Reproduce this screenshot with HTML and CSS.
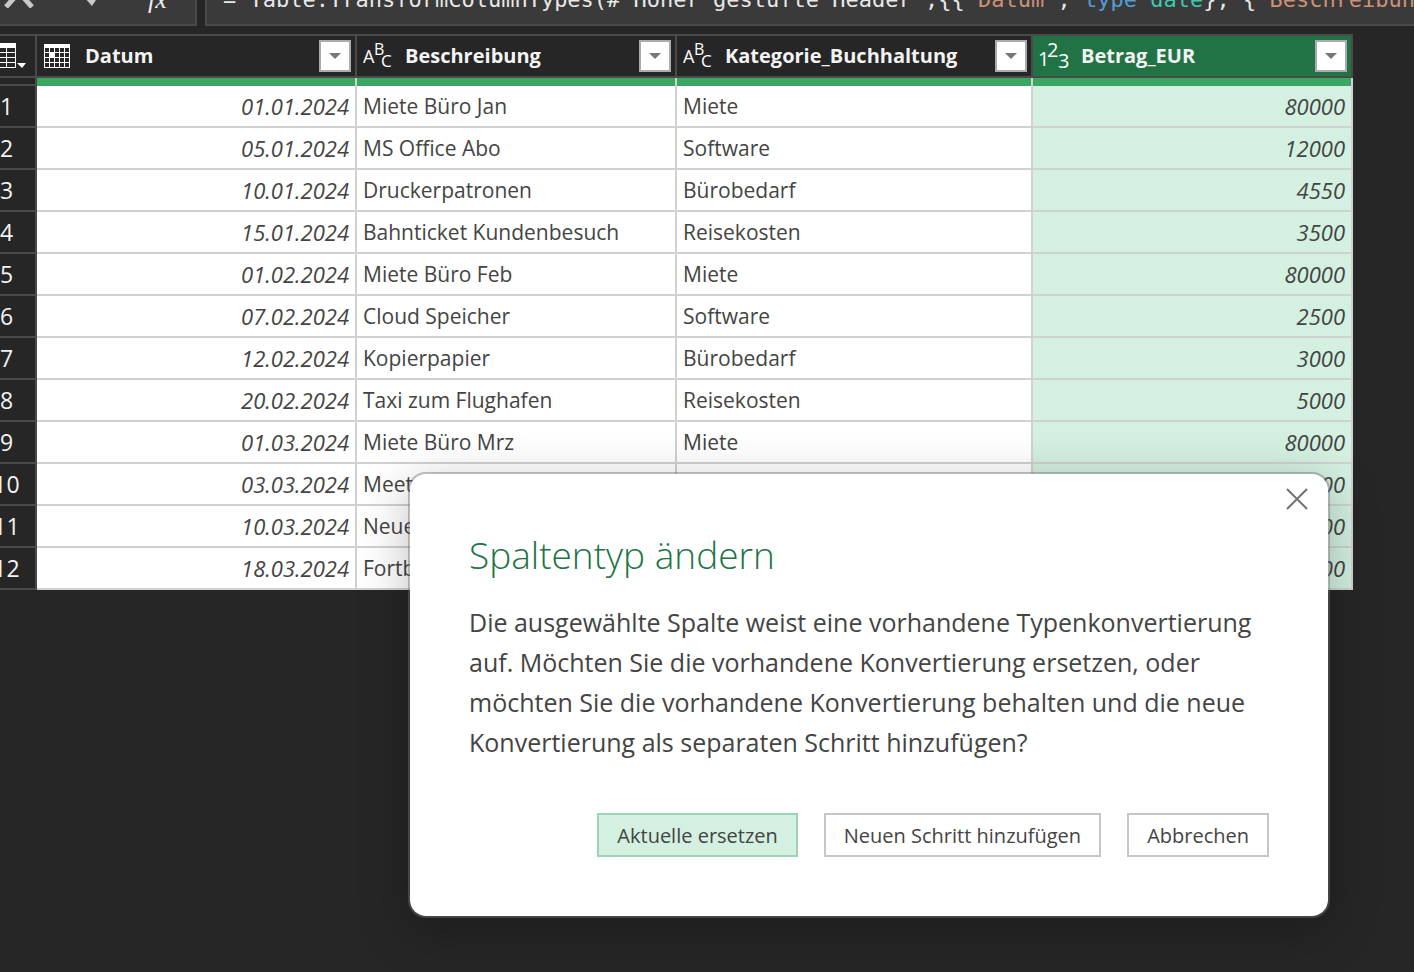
FILE: index.html
```html
<!DOCTYPE html>
<html lang="de">
<head>
<meta charset="utf-8">
<title>Power Query-Editor</title>
<meta name="viewport" content="width=device-width, initial-scale=1">
<link rel="stylesheet" href="styles.css">
</head>
<body>
<svg class="defs" aria-hidden="true">
  <symbol id="type-text" viewBox="0 0 32 28">
    <text x="0" y="21" font-size="18">A</text>
    <text x="11" y="13" font-size="16">B</text>
    <text x="18" y="25" font-size="17">C</text>
  </symbol>
  <symbol id="type-number" viewBox="0 0 32 28">
    <text x="-1" y="24" font-size="20">1</text>
    <text x="8" y="15" font-size="20">2</text>
    <text x="19" y="26" font-size="20">3</text>
  </symbol>
  <symbol id="type-date" viewBox="0 0 26 24">
    <path d="M0 0h26v24H0z" fill="#fff"/>
    <path d="M1 4h4v4H1zM6 4h4v4H6zM11 4h4v4h-4zM16 4h4v4h-4zM21 4h4v4h-4zM1 9h4v4H1zM11 9h4v4h-4zM16 9h4v4h-4zM21 9h4v4h-4zM1 14h4v4H1zM6 14h4v4H6zM11 14h4v4h-4zM16 14h4v4h-4zM21 14h4v4h-4zM1 19h4v4H1zM6 19h4v4H6zM11 19h4v4h-4zM16 19h4v4h-4zM21 19h4v4h-4z" fill="#262626"/>
    <path d="M5 8h6v6H5z" fill="#fff"/>
  </symbol>
  <symbol id="caret" viewBox="0 0 12 6"><path d="M0 0h12L6 6z"/></symbol>
</svg>

<main class="editor">
  <div class="formula-bar">
    <div class="formula-actions">
      <button class="icon-button" aria-label="Abbrechen"><svg width="30" height="30" viewBox="0 0 30 30"><path d="M2 29L26 2M4 2L28 29" fill="none" stroke="#c8c8c8" stroke-width="5"/></svg></button>
      <button class="icon-button" aria-label="Übernehmen"><svg width="30" height="30" viewBox="0 0 30 30"><path d="M8 19L16 28L24 16V0H8z" fill="#c8c8c8"/></svg></button>
      <button class="icon-button fx" aria-label="Funktion einfügen">fx</button>
    </div>
    <div class="formula"><code>= Table.TransformColumnTypes(#"Höher gestufte Header",{{<span class="str">"Datum"</span>, <span class="kw">type</span> <span class="ty">date</span>}, {<span class="str">"Beschreibung"</span></code></div>
  </div>

  <table class="grid">
    <colgroup><col class="c-index"><col class="c-std"><col class="c-std"><col class="c-wide"><col class="c-std"></colgroup>
    <thead>
      <tr>
        <th class="corner"><button class="table-menu" aria-label="Tabellenmenü"><svg width="34" height="26" viewBox="0 0 34 26"><path d="M0 0h24v25H0z" fill="#fff"/><path d="M0 5h6v4H0zM0 10h6v4H0zM0 15h6v4H0zM0 20h6v4H0zM7 5h7v4H7zM7 10h7v4H7zM7 15h7v4H7zM7 20h7v4H7zM15 5h8v4h-8zM15 10h8v4h-8zM15 15h8v4h-8zM15 20h8v4h-8z" fill="#262626"/><path d="M25 20h9l-4 5z" fill="#fff"/></svg></button></th>
        <th scope="col"><div class="head"><svg class="date-icon"><use href="#type-date"/></svg><span class="name">Datum</span><button class="filter" aria-label="Datum filtern"><svg><use href="#caret"/></svg></button></div></th>
        <th scope="col"><div class="head"><svg class="type-icon"><use href="#type-text"/></svg><span class="name">Beschreibung</span><button class="filter" aria-label="Beschreibung filtern"><svg><use href="#caret"/></svg></button></div></th>
        <th scope="col"><div class="head"><svg class="type-icon"><use href="#type-text"/></svg><span class="name">Kategorie_Buchhaltung</span><button class="filter" aria-label="Kategorie_Buchhaltung filtern"><svg><use href="#caret"/></svg></button></div></th>
        <th scope="col" class="selected"><div class="head"><svg class="type-icon"><use href="#type-number"/></svg><span class="name">Betrag_EUR</span><button class="filter" aria-label="Betrag_EUR filtern"><svg><use href="#caret"/></svg></button></div></th>
      </tr>
      <tr class="quality"><td></td><td></td><td></td><td></td><td></td></tr>
    </thead>
    <tbody>
      <tr><th scope="row">1</th><td>01.01.2024</td><td>Miete Büro Jan</td><td>Miete</td><td>80000</td></tr>
      <tr><th scope="row">2</th><td>05.01.2024</td><td>MS Office Abo</td><td>Software</td><td>12000</td></tr>
      <tr><th scope="row">3</th><td>10.01.2024</td><td>Druckerpatronen</td><td>Bürobedarf</td><td>4550</td></tr>
      <tr><th scope="row">4</th><td>15.01.2024</td><td>Bahnticket Kundenbesuch</td><td>Reisekosten</td><td>3500</td></tr>
      <tr><th scope="row">5</th><td>01.02.2024</td><td>Miete Büro Feb</td><td>Miete</td><td>80000</td></tr>
      <tr><th scope="row">6</th><td>07.02.2024</td><td>Cloud Speicher</td><td>Software</td><td>2500</td></tr>
      <tr><th scope="row">7</th><td>12.02.2024</td><td>Kopierpapier</td><td>Bürobedarf</td><td>3000</td></tr>
      <tr><th scope="row">8</th><td>20.02.2024</td><td>Taxi zum Flughafen</td><td>Reisekosten</td><td>5000</td></tr>
      <tr><th scope="row">9</th><td>01.03.2024</td><td>Miete Büro Mrz</td><td>Miete</td><td>80000</td></tr>
      <tr><th scope="row">10</th><td>03.03.2024</td><td>Meet</td><td></td><td>00</td></tr>
      <tr><th scope="row">11</th><td>10.03.2024</td><td>Neue</td><td></td><td>00</td></tr>
      <tr><th scope="row">12</th><td>18.03.2024</td><td>Fortb</td><td></td><td>00</td></tr>
    </tbody>
  </table>
</main>

<section class="dialog" role="dialog" aria-labelledby="dialog-title" aria-describedby="dialog-text">
  <button class="close" aria-label="Schließen"><svg width="22" height="22" viewBox="0 0 22 22"><path d="M1 1L21 21M21 1L1 21" fill="none" stroke="#737373" stroke-width="2"/></svg></button>
  <h1 id="dialog-title">Spaltentyp ändern</h1>
  <p id="dialog-text">Die ausgewählte Spalte weist eine vorhandene Typenkonvertierung<br>auf. Möchten Sie die vorhandene Konvertierung ersetzen, oder<br>möchten Sie die vorhandene Konvertierung behalten und die neue<br>Konvertierung als separaten Schritt hinzufügen?</p>
  <div class="actions">
    <button class="btn primary">Aktuelle ersetzen</button>
    <button class="btn">Neuen Schritt hinzufügen</button>
    <button class="btn">Abbrechen</button>
  </div>
</section>
</body>
</html>
```

FILE: styles.css
```css
* { box-sizing: border-box; }

body {
  margin: 0;
  min-height: 100vh;
  overflow: hidden;
  background: #262626;
  color: #444;
  font-family: "Open Sans", "Noto Sans", sans-serif;
}

button { font: inherit; margin: 0; cursor: pointer; }
.defs { position: absolute; width: 0; height: 0; }

.formula-bar { display: flex; gap: 8px; height: 26px; margin-bottom: 8px; }
.formula-actions,
.formula {
  display: flex;
  align-items: flex-end;
  overflow: hidden;
  background: #3a3a3a;
  border-bottom: 2px solid #4a4a4a;
}
.formula-actions {
  flex: 0 0 197px;
  gap: 42px;
  padding-left: 4px;
  border-right: 2px solid #4a4a4a;
}
.formula { flex: 1; min-width: 0; padding: 0 0 10px 16px; border-left: 2px solid #4a4a4a; }
.formula code {
  font: 22px/28px "DejaVu Sans Mono", "Liberation Mono", monospace;
  white-space: pre;
  color: #e8e8e8;
}
.str { color: #ce9178; }
.kw { color: #569cd6; }
.ty { color: #3dc9b0; }

.icon-button {
  display: flex;
  padding: 0 0 16px;
  border: 0;
  background: none;
  color: #eee;
}
.fx { font: italic 26px/30px "Liberation Serif", serif; padding-bottom: 9px; }

/* The row-number column is partly scrolled out on the left. */
.grid {
  width: 1375px;
  margin-left: -22px;
  table-layout: fixed;
  border-collapse: separate;
  border-spacing: 0;
  font-size: 21px;
  line-height: 40px;
}
.c-index { width: 59px; }
.c-std { width: 320px; }
.c-wide { width: 356px; }

.grid th, .grid td { padding: 0; border: 0 solid #d1d1d1; border-width: 0 2px 2px 0; }
.grid th { border-color: #4a4a4a; color: #f3f3f3; }
.grid thead th { border-top-width: 2px; height: 44px; }
.grid .selected { background: #217346; }

.head { display: flex; align-items: center; height: 40px; padding: 0 4px 0 6px; text-align: left; }
.type-icon { flex: none; width: 32px; height: 28px; margin-right: 10px; fill: #fff; font-weight: 500; overflow: visible; }
.date-icon { flex: none; width: 26px; height: 24px; margin: 0 15px 0 1px; }
.name { flex: 1; font-weight: 700; font-size: 20px; }
.filter {
  display: flex;
  flex: none;
  align-items: center;
  justify-content: center;
  width: 32px;
  height: 32px;
  padding: 0;
  border: 2px solid #ababab;
  background: #fff;
}
.filter svg { width: 12px; height: 6px; fill: #777; }
.table-menu { display: flex; padding: 0 0 0 14px; border: 0; background: none; }

.grid .quality td { height: 8px; border-bottom: 0; background: #39a661; }
.grid .quality td:first-child { background: none; border-color: #4a4a4a; border-bottom: 2px solid #4a4a4a; }

.grid tbody th { font-size: 23px; font-weight: 400; text-align: center; }
.grid tbody td { padding: 0 6px; background: #fff; }
.grid tbody td:nth-child(2), .grid tbody td:nth-child(5) { text-align: right; font-size: 22px; font-style: italic; }
.grid tbody td:nth-child(5) { background: #d3f0e0; }

.dialog {
  position: absolute;
  top: 472px;
  right: 84px;
  width: 922px;
  padding: 54px 59px 59px 59px;
  border: 2px solid rgba(110, 110, 110, 0.45);
  border-radius: 18px;
  background: #fff padding-box;
  box-shadow: 0 12px 50px rgba(0, 0, 0, 0.25);
}
.dialog h1 { margin: 0 0 20px; color: #217346; font-size: 37px; line-height: 54px; font-weight: 300; }
.dialog p { margin: 0; font-size: 25px; line-height: 40px; white-space: nowrap; }
.close { position: absolute; top: 14px; right: 20px; display: flex; padding: 0; border: 0; background: none; }
.actions { display: flex; justify-content: flex-end; gap: 26px; margin-top: 51px; }
.btn {
  height: 44px;
  padding: 0 18px;
  border: 2px solid #c6c6c6;
  background: #fff;
  color: #444;
  font-size: 20px;
  white-space: nowrap;
}
.btn.primary { border-color: #9bd5b5; background: #d3f0e0; }
```
